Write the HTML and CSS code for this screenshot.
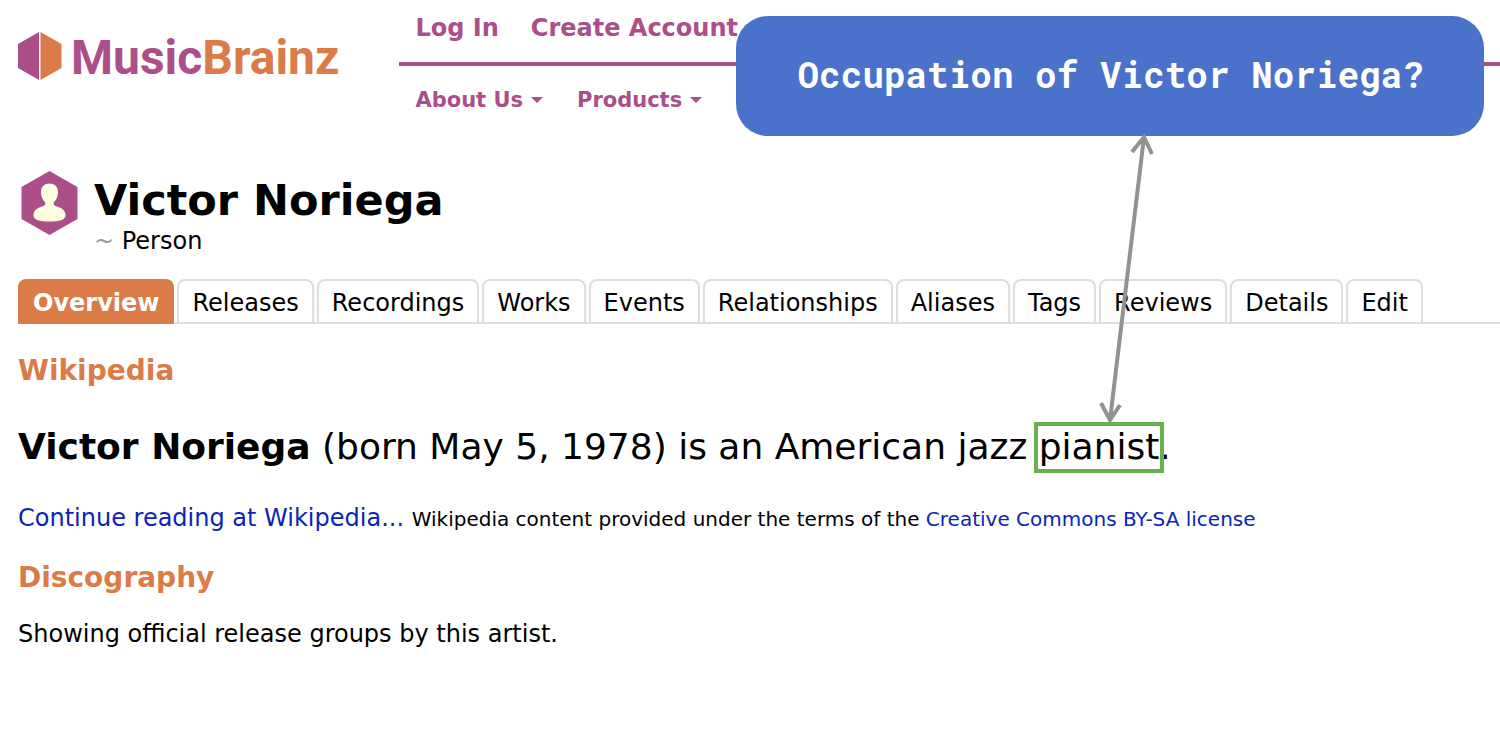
FILE: index.html
```html
<!DOCTYPE html>
<html lang="en">
<head>
<meta charset="utf-8">
<title>Victor Noriega - MusicBrainz</title>
<link rel="stylesheet" href="styles.css">
</head>
<body>
<header class="site-header">
  <a class="logo" href="#">
    <svg class="logo-mark" width="44" height="48" viewBox="0 0 44 48" aria-hidden="true">
      <path fill="#ab4e8a" d="M21 0V48L0 36V12Z"/>
      <path fill="#db7b48" d="M22.500 0V48L43.500 36V12Z"/>
    </svg>
    <span class="logo-name">Music<span class="logo-accent">Brainz</span></span>
  </a>
  <nav class="menus">
    <div class="account-menu">
      <a href="#">Log In</a>
      <a href="#">Create Account</a>
    </div>
    <div class="site-menu">
      <button type="button">About Us<span class="caret"></span></button>
      <button type="button">Products<span class="caret"></span></button>
    </div>
  </nav>
</header>
<main>
  <div class="artist-header">
    <svg class="artist-icon" width="57" height="64" viewBox="0 0 57 64" aria-hidden="true">
      <path fill="#ab4e8a" d="M28.500 0L56.500 16V48L28.500 64L.5 48V16Z"/>
      <path fill="#ffffe0" d="M28.500 12.500C23 12.500 20 16 20 21C20 25 21.500 29 24 31C25 33 24 34.500 21 35.500C15 37.500 12.500 40 12.500 44.500C12.500 49 19 50.500 28.500 50.500S44.500 49 44.500 44.500C44.500 40 42 37.500 36 35.500C33 34.500 32 33 33 31C35.500 29 37 25 37 21C37 16 34 12.500 28.500 12.500Z"/>
    </svg>
    <div>
      <h1>Victor Noriega</h1>
      <p class="subheader"><span class="prefix">~</span> Person</p>
    </div>
  </div>
  <nav class="tabs">
    <a class="current" href="#">Overview</a>
    <a href="#">Releases</a>
    <a href="#">Recordings</a>
    <a href="#">Works</a>
    <a href="#">Events</a>
    <a href="#">Relationships</a>
    <a href="#">Aliases</a>
    <a href="#">Tags</a>
    <a href="#">Reviews</a>
    <a href="#">Details</a>
    <a href="#">Edit</a>
  </nav>
  <section class="wikipedia">
    <h2>Wikipedia</h2>
    <p class="extract"><b>Victor Noriega</b> (born May 5, 1978) is an American jazz <span class="answer">pianist</span>.</p>
    <p class="source"><a href="#">Continue reading at Wikipedia...</a> <small>Wikipedia content provided under the terms of the <a href="#">Creative Commons BY-SA license</a></small></p>
  </section>
  <section>
    <h2>Discography</h2>
    <p>Showing official release groups by this artist.</p>
  </section>
</main>
<aside class="question">Occupation of Victor Noriega?</aside>
<svg class="arrow" width="60" height="290" viewBox="0 0 60 290" aria-hidden="true">
  <path d="M46 3L12 286M34 18L46 3L54 20M3 269L12 286L22 271"/>
</svg>
</body>
</html>
```

FILE: styles.css
```css
* { box-sizing: border-box; }

body {
  position: relative;
  margin: 0;
  background: #fff;
  color: #000;
  font: 24px/32px Verdana, "DejaVu Sans", sans-serif;
}

h1, h2, p { margin: 0; }

a { color: #0a24b8; text-decoration: none; }

.site-header {
  display: flex;
  gap: 60px;
  padding-left: 18px;
}

.logo {
  display: flex;
  align-items: center;
  align-self: flex-start;
  gap: 9px;
  margin-top: 32px;
}

.logo-name {
  padding-top: 4px;
  color: #ab4e8a;
  font: 700 48px/44px Roboto, sans-serif;
}

.logo-accent { color: #db7b48; }

.menus { flex: 1; white-space: nowrap; }

.account-menu {
  display: flex;
  gap: 32px;
  height: 66px;
  padding: 12px 16px;
  border-bottom: 4px solid #ab4e8a;
}

.account-menu a { color: #ab4e8a; font-weight: 700; }

.site-menu { display: flex; gap: 34px; padding: 18px 16px; }

.site-menu button {
  display: flex;
  align-items: center;
  gap: 8px;
  padding: 0;
  border: 0;
  background: none;
  color: #ab4e8a;
  font: 700 21px/32px Verdana, "DejaVu Sans", sans-serif;
}

.caret {
  border: 6px solid transparent;
  border-top-color: #ab4e8a;
  border-bottom: 0;
}

main { padding-left: 18px; }

.artist-header {
  display: flex;
  gap: 16px;
  padding: 37px 0 0 3px;
}

h1 { font-size: 43px; line-height: 58px; }

.subheader { line-height: 24px; }

.prefix { color: #999; }

.tabs {
  display: flex;
  gap: 3px;
  margin-top: 26px;
  border-bottom: 2px solid #ddd;
  white-space: nowrap;
}

.tabs a {
  height: 43px;
  padding: 6px 13px;
  border: 2px solid #ddd;
  border-bottom: 0;
  border-radius: 8px 8px 0 0;
  color: #000;
}

.tabs .current {
  height: 45px;
  margin-bottom: -2px;
  border-color: #db7b48;
  background: #db7b48;
  color: #fff;
  font-weight: 700;
}

h2 {
  margin-top: 27px;
  color: #db7b48;
  font-size: 28px;
  line-height: 40px;
}

section + section h2 { margin-top: 23px; }

section p { margin-top: 20px; }

.wikipedia .extract {
  margin-top: 32px;
  font-size: 36px;
  line-height: 48px;
}

.wikipedia .source { margin-top: 31px; }

.source small { font-size: 20px; }

.answer { position: relative; }

.answer::after {
  position: absolute;
  inset: -4px -5px -6px;
  border: 4px solid #67b24d;
  content: "";
}

.question {
  position: absolute;
  top: 16px;
  right: 16px;
  padding: 34px 60px 38px 61px;
  border-radius: 32px;
  background: #4a72cb;
  color: #fff;
  font: 700 36px/48px "Roboto Mono", "DejaVu Sans Mono", monospace;
  white-space: nowrap;
}

.arrow {
  position: absolute;
  top: 134px;
  right: 342px;
  fill: none;
  stroke: #929292;
  stroke-width: 4;
}
```
